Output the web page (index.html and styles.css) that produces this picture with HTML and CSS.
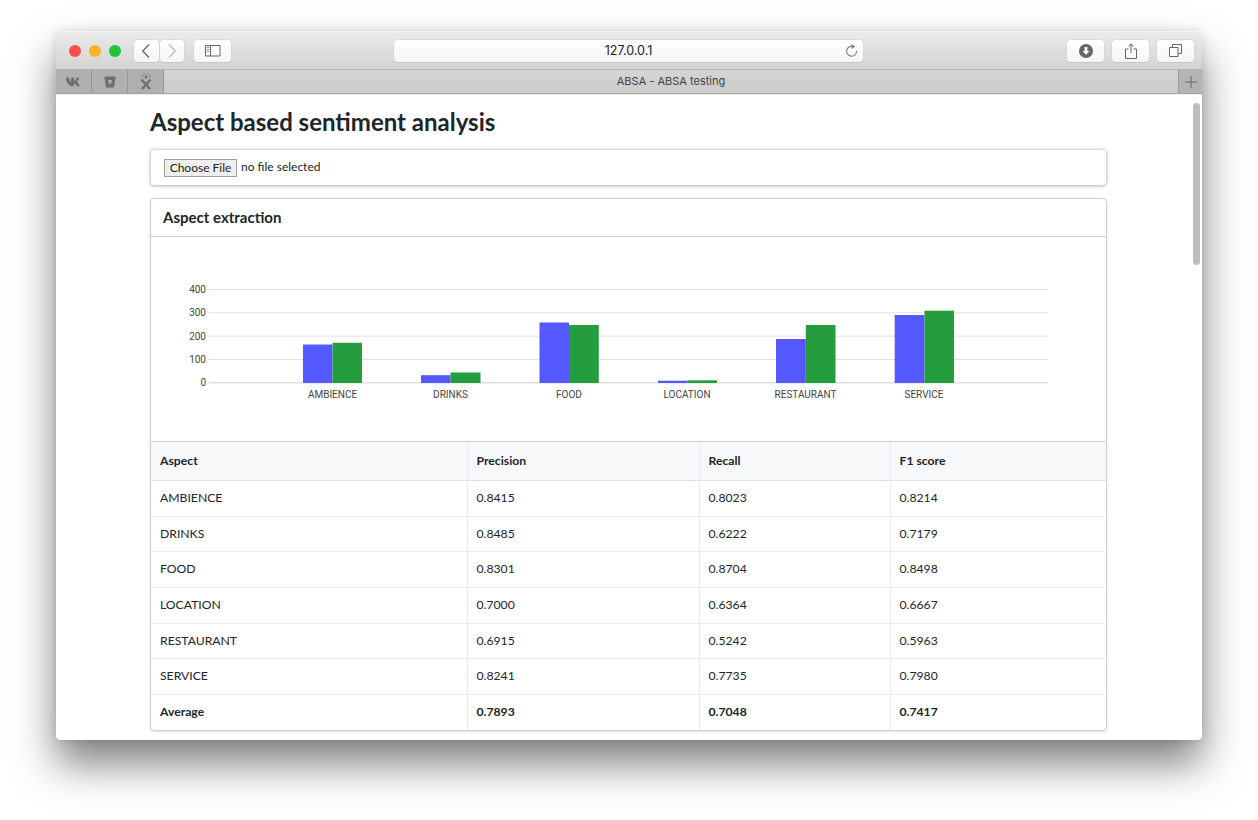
FILE: index.html
```html
<!DOCTYPE html>
<html lang="en">
<head>
  <meta charset="UTF-8" />
  <title>ABSA - ABSA testing</title>
  <link rel="stylesheet" href="styles.css">
</head>
<body>

  <div class="ventana">

    <!-- Barra de Safari -->
    <div class="toolbar">
      <div class="luces">
        <span class="luz roja"></span>
        <span class="luz amarilla"></span>
        <span class="luz verde"></span>
      </div>
      <div class="nav">
        <div class="boton b-nav">
          <svg width="10" height="16" viewBox="0 0 10 16"><path d="M8 1.5 1.8 8 8 14.5" fill="none" stroke="#666" stroke-width="1.3"/></svg>
        </div>
        <div class="boton b-nav">
          <svg width="10" height="16" viewBox="0 0 10 16"><path d="M2 1.5 8.2 8 2 14.5" fill="none" stroke="#bbb" stroke-width="1.3"/></svg>
        </div>
      </div>
      <div class="boton b-side">
        <svg width="16" height="12" viewBox="0 0 16 12"><path d="M.5.5h14.5v10.500H.5zM5.500.5V11" fill="none" stroke="#666"/><path d="M1.800 2.500h2.400M1.800 4.500h2.400M1.800 6.500h2.400" stroke="#888"/></svg>
      </div>
      <div class="boton direccion">
        <span>127.0.0.1</span>
        <svg class="recargar" width="13" height="14" viewBox="0 0 13 14"><path d="M8.600 2.600A5 5 0 1 0 11.600 7" fill="none" stroke="#777" stroke-width="1.100"/><path d="M6.800 .2 10.200 2.600 6.800 5z" fill="#777"/></svg>
      </div>
      <div class="derecha">
        <div class="boton b-der">
          <svg width="14" height="14" viewBox="0 0 14 14"><circle cx="7" cy="7" r="7" fill="#666"/><path d="M5.600 3h2.800v4h2.200L7 10.800 3.400 7h2.200z" fill="#fff"/></svg>
        </div>
        <div class="boton b-der">
          <svg width="12" height="16" viewBox="0 0 12 16"><path d="M3.500 6H.5v9.500h11V6h-3" fill="none" stroke="#666"/><path d="M6 1v9" stroke="#666"/><path d="M3.500 3.400 6 .8l2.500 2.600" fill="none" stroke="#666"/></svg>
        </div>
        <div class="boton b-der">
          <svg width="13" height="13" viewBox="0 0 13 13"><path d="M.5 3.500h8.500v9H.5z" fill="none" stroke="#666"/><path d="M3.500 3.500V.5h9v9H9" fill="none" stroke="#666"/></svg>
        </div>
      </div>
    </div>

    <!-- Pestañas -->
    <div class="tabs">
      <div class="pin">
        <svg width="16" height="10" viewBox="0 0 16 10"><path d="M0 .5h3c.2 2.300 1.200 4 2.200 4.300V.5h2.700v3.700C9 4 10.100 2.600 10.600.5h2.700c-.4 2-1.700 3.600-2.700 4.200 1 .6 2.500 1.900 3.200 4.600h-3C10.300 7.600 9.200 6.400 7.900 6.200v3.100h-.6C3 9.300.3 6 0 .5z" fill="#6f6f6f"/></svg>
      </div>
      <div class="pin">
        <svg width="12" height="12" viewBox="0 0 12 12"><path fill-rule="evenodd" d="M.3.5h11.400L10 11.500H2zM4.200 4l.4 3.500h2.800L7.800 4z" fill="#6f6f6f"/></svg>
      </div>
      <div class="pin">
        <svg width="14" height="17" viewBox="0 0 14 17"><g fill="#6f6f6f"><circle cx="7" cy="4" r="1.500"/><circle cx="3" cy="3" r=".8"/><circle cx="11" cy="3" r=".8"/><circle cx="5" cy="1" r=".7"/><circle cx="9" cy="1" r=".7"/></g><path d="M2.500 6.500 11 16M11.500 6.500 3 16" stroke="#6f6f6f" stroke-width="2.500" fill="none"/></svg>
      </div>
      <div class="titulo-tab">ABSA - ABSA testing</div>
      <div class="tab-nueva">
        <svg width="12" height="12" viewBox="0 0 12 12"><path d="M6 0v12M0 6h12" stroke="#666"/></svg>
      </div>
    </div>

    <!-- Contenido -->
    <div class="pagina">
      <div class="scrollbar"></div>
      <div class="contenedor">
        <h1>Aspect based sentiment analysis</h1>

        <div class="caja-archivo">
          <button class="elegir">Choose File</button>
          <span>no file selected</span>
        </div>

        <div class="card">
          <div class="card-header">Aspect extraction</div>

          <div class="grafico">
            <svg width="955" height="204" viewBox="151 237 955 204">
              <g stroke="#e0e0e0">
                <path d="M209 289.500H1048M209 312.800H1048M209 336.100H1048M209 359.500H1048"/>
                <path d="M209 382.800H1048" stroke-width="1.500"/>
              </g>
              <g class="ejes">
                <text x="206" y="293" text-anchor="end">400</text>
                <text x="206" y="316" text-anchor="end">300</text>
                <text x="206" y="340" text-anchor="end">200</text>
                <text x="206" y="363" text-anchor="end">100</text>
                <text x="206" y="386" text-anchor="end">0</text>
              </g>
              <g fill="#5359ff">
                <rect x="303" y="344.500" width="29.500" height="38.500"/>
                <rect x="421" y="375.200" width="29.500" height="7.800"/>
                <rect x="539.500" y="322.500" width="29.500" height="60.500"/>
                <rect x="658" y="380.700" width="29.500" height="2.300"/>
                <rect x="776" y="339" width="29.800" height="44"/>
                <rect x="894.700" y="315" width="29.800" height="68"/>
              </g>
              <g fill="#259d3f">
                <rect x="332.500" y="342.800" width="29.500" height="40.200"/>
                <rect x="450.500" y="372.500" width="30" height="10.500"/>
                <rect x="569" y="325" width="29.800" height="58"/>
                <rect x="687.500" y="380.300" width="29.500" height="2.700"/>
                <rect x="805.800" y="325" width="29.700" height="58"/>
                <rect x="924.500" y="310.700" width="29.500" height="72.300"/>
              </g>
              <g class="ejes" text-anchor="middle">
                <text x="332.500" y="398">AMBIENCE</text>
                <text x="450.500" y="398">DRINKS</text>
                <text x="569" y="398">FOOD</text>
                <text x="687" y="398">LOCATION</text>
                <text x="805.500" y="398">RESTAURANT</text>
                <text x="924" y="398">SERVICE</text>
              </g>
            </svg>
          </div>

          <table class="tabla">
            <colgroup>
              <col class="c1"><col class="c2"><col class="c3"><col class="c4">
            </colgroup>
            <thead>
              <tr><th>Aspect</th><th>Precision</th><th>Recall</th><th>F1 score</th></tr>
            </thead>
            <tbody>
              <tr><td>AMBIENCE</td><td>0.8415</td><td>0.8023</td><td>0.8214</td></tr>
              <tr><td>DRINKS</td><td>0.8485</td><td>0.6222</td><td>0.7179</td></tr>
              <tr><td>FOOD</td><td>0.8301</td><td>0.8704</td><td>0.8498</td></tr>
              <tr><td>LOCATION</td><td>0.7000</td><td>0.6364</td><td>0.6667</td></tr>
              <tr><td>RESTAURANT</td><td>0.6915</td><td>0.5242</td><td>0.5963</td></tr>
              <tr><td>SERVICE</td><td>0.8241</td><td>0.7735</td><td>0.7980</td></tr>
              <tr class="promedio"><td>Average</td><td>0.7893</td><td>0.7048</td><td>0.7417</td></tr>
            </tbody>
          </table>
        </div>
      </div>
    </div>

  </div>

</body>
</html>
```

FILE: styles.css
```css
html, body {
  height: 820px;
  overflow: hidden;
}

body {
  margin: 0;
  background: #fff;
  font-family: 'Lato', sans-serif;
  color: #212529;
}

.ventana {
  width: 1146px;
  height: 709px;
  margin: 31px 0 0 56px;
  border-radius: 5px;
  overflow: hidden;
  display: flex;
  flex-direction: column;
  background: #fff;
}

/* la sombra va aparte porque overflow no la corta */
body::before {
  content: "";
  position: absolute;
  left: 56px;
  top: 31px;
  width: 1146px;
  height: 709px;
  border-radius: 5px;
  box-shadow: 0 24px 42px rgba(0,0,0,0.5), 0 0 8px rgba(0,0,0,0.12);
  z-index: -1;
}

.toolbar {
  height: 39px;
  box-sizing: border-box;
  padding-top: 1px;
  flex: none;
  display: flex;
  align-items: center;
  background: linear-gradient(to bottom, #ebebeb, #d3d3d3);
  border-bottom: 1px solid #b3b3b3;
  box-shadow: inset 0 1px 0 #f6f6f6;
  position: relative;
}

.luces {
  display: flex;
  gap: 8px;
  margin-left: 13px;
  margin-right: 13px;
}

.luz {
  width: 12px;
  height: 12px;
  border-radius: 50%;
}
.roja { background: #fc4d4d; }
.amarilla { background: #fdb325; }
.verde { background: #22c33a; }

.boton {
  height: 22px;
  background: linear-gradient(to bottom, #fff, #f5f5f5);
  border-radius: 4px;
  box-shadow: 0 0 0 .5px #cfcfcf, 0 1px 0 #bdbdbd;
  display: flex;
  align-items: center;
  justify-content: center;
}

.nav {
  display: flex;
  gap: 1px;
  margin-right: 10px;
}

.b-nav { width: 24.500px; }
.b-side { width: 37px; margin-right: 163px; }

.direccion {
  width: 469px;
  position: relative;
  font-size: 12.500px;
  font-family: 'Inter', sans-serif;
  color: #222;
}

.recargar {
  position: absolute;
  right: 5px;
  top: 4px;
}

.derecha {
  display: flex;
  gap: 8px;
  margin-left: 204px;
}

.b-der { width: 37px; }

.tabs {
  height: 24px;
  box-sizing: border-box;
  flex: none;
  display: flex;
  background: linear-gradient(to bottom, #d5d5d5, #cbcbcb);
  border-bottom: 1px solid #a3a3a3;
  font-size: 11px;
  font-family: 'Inter', sans-serif;
  color: #444;
}

.pin {
  width: 36px;
  box-sizing: border-box;
  background: #b0b0b0;
  border-right: 1px solid #989898;
  display: flex;
  align-items: center;
  justify-content: center;
}

.titulo-tab {
  flex: 1;
  text-align: center;
  line-height: 23px;
}

.tab-nueva {
  width: 24px;
  box-sizing: border-box;
  background: #b4b4b4;
  border-left: 1px solid #989898;
  display: flex;
  align-items: center;
  justify-content: center;
}

.pagina {
  flex: 1;
  position: relative;
  overflow: hidden;
  background: #fff;
  border-top: 1px solid #eee;
}

.scrollbar {
  position: absolute;
  right: 2px;
  top: 8px;
  width: 7px;
  height: 162px;
  background: #bdbdbd;
  border-radius: 4px;
}

.contenedor {
  width: 957px;
  margin-left: 94px;
}

h1 {
  font-size: 24px;
  font-weight: 700;
  line-height: 30px;
  margin: 12px 0 13px 0;
}

.caja-archivo {
  margin: 0 1px;
  height: 35px;
  box-sizing: border-box;
  padding: 9px 13px;
  display: flex;
  align-items: flex-start;
  gap: 4px;
  background: #fff;
  border-radius: 3px;
  box-shadow: 0 0 4px rgba(0,0,0,0.3), 0 1px 3px rgba(0,0,0,0.15);
  font-size: 12px;
  line-height: 16px;
}

.elegir {
  width: 73px;
  height: 18px;
  padding: 0 0 2px 0;
  font-family: 'Lato', sans-serif;
  font-size: 12px;
  color: #222;
  background: #efefef;
  border: 1px solid #a0a0a0;
}

.card {
  margin-top: 13px;
  background: #fff;
  border: 1px solid #cfcfcf;
  border-radius: 4px;
  box-shadow: 0 1px 3px rgba(0,0,0,0.12);
  box-sizing: border-box;
  height: 533px;
}

.card-header {
  height: 38px;
  box-sizing: border-box;
  padding-left: 12px;
  font-size: 15px;
  font-weight: 700;
  line-height: 37px;
  border-bottom: 1px solid #cfcfcf;
}

.grafico {
  height: 204px;
}

.grafico svg {
  display: block;
}

.ejes text {
  font-family: 'Roboto', sans-serif;
  font-size: 10px;
  fill: #444;
}

.tabla {
  width: 955px;
  table-layout: fixed;
  border-collapse: collapse;
  font-size: 12.200px;
}

.c1 { width: 316px; }
.c2 { width: 232px; }
.c3 { width: 191px; }
.c4 { width: 216px; }

.tabla th, .tabla td {
  padding: 0 9px 2px 9px;
  text-align: left;
  height: 35.700px;
  box-sizing: border-box;
  border-top: 1px solid #e9ecef;
  border-left: 1px solid #e9ecef;
}

.tabla th:first-child, .tabla td:first-child {
  border-left: none;
}

.tabla th {
  height: 39px;
  background: #f7f8f9;
  font-weight: 700;
  border-top: 1px solid #cfcfcf;
}

.tabla tbody tr:first-child td {
  border-top: 1px solid #dee2e6;
}

.promedio td {
  font-weight: 700;
}
```
